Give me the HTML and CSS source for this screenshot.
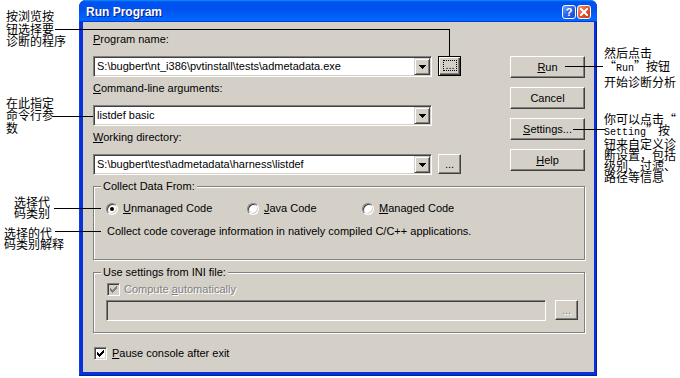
FILE: index.html
```html
<!DOCTYPE html>
<html lang="zh-CN">
<head>
    <meta charset="UTF-8">
    <meta name="viewport" content="width=device-width, initial-scale=1.0">
    <title>Run Program</title>
    <link rel="stylesheet" href="styles.css">
</head>
<body>
    <div class="page">
        <!-- callouts on the left -->
        <div class="notes notes-left">
            <p class="note note-browse">按浏览按<br>钮选择要<br>诊断的程序</p>
            <p class="note note-args">在此指定<br>命令行参<br>数</p>
            <p class="note note-type">选择代<br>码类别</p>
            <p class="note note-desc">选择的代<br>码类别解释</p>
        </div>

        <div class="window">
            <div class="titlebar">
                <span class="title">Run Program</span>
                <div class="caption-btns">
                    <span class="caption-btn help-btn">?</span>
                    <span class="caption-btn close-btn">
                        <svg width="8" height="8" viewBox="0 0 8 8">
                            <path d="M1 1L7 7M7 1L1 7" stroke="#fff" stroke-width="2" stroke-linecap="square"/>
                        </svg>
                    </span>
                </div>
            </div>

            <div class="dialog">
                <div class="top">
                    <div class="fields">
                        <div class="field-label"><u>P</u>rogram name:</div>
                        <div class="field-row">
                            <div class="combo">
                                <span class="combo-text">S:\bugbert\nt_i386\pvtinstall\tests\admetadata.exe</span>
                                <span class="drop"><svg width="7" height="4" viewBox="0 0 7 4"><path d="M0 0h7v1h-7zM1 1h5v1h-5zM2 2h3v1h-3zM3 3h1v1h-1z"/></svg></span>
                            </div>
                            <span class="btn browse focused"><span class="focus-rect">...</span></span>
                        </div>

                        <div class="field-label"><u>C</u>ommand-line arguments:</div>
                        <div class="field-row">
                            <div class="combo">
                                <span class="combo-text">listdef basic</span>
                                <span class="drop"><svg width="7" height="4" viewBox="0 0 7 4"><path d="M0 0h7v1h-7zM1 1h5v1h-5zM2 2h3v1h-3zM3 3h1v1h-1z"/></svg></span>
                            </div>
                        </div>

                        <div class="field-label"><u>W</u>orking directory:</div>
                        <div class="field-row">
                            <div class="combo">
                                <span class="combo-text">S:\bugbert\test\admetadata\harness\listdef</span>
                                <span class="drop"><svg width="7" height="4" viewBox="0 0 7 4"><path d="M0 0h7v1h-7zM1 1h5v1h-5zM2 2h3v1h-3zM3 3h1v1h-1z"/></svg></span>
                            </div>
                            <span class="btn browse">...</span>
                        </div>
                    </div>

                    <div class="actions">
                        <span class="btn push"><span><u>R</u>un</span></span>
                        <span class="btn push">Cancel</span>
                        <span class="btn push"><span><u>S</u>ettings...</span></span>
                        <span class="btn push"><span><u>H</u>elp</span></span>
                    </div>
                </div>

                <div class="group group-collect">
                    <span class="group-title">Collect Data From:</span>
                    <div class="radio-row">
                        <span class="radio-item wide"><span class="radio on"></span><span><u>U</u>nmanaged Code</span></span>
                        <span class="radio-item mid"><span class="radio"></span><span><u>J</u>ava Code</span></span>
                        <span class="radio-item"><span class="radio"></span><span><u>M</u>anaged Code</span></span>
                    </div>
                    <div class="desc">Collect code coverage information in natively compiled C/C++ applications.</div>
                </div>

                <div class="group group-ini">
                    <span class="group-title">Use settings from INI file:</span>
                    <div class="check-row ini-check">
                        <span class="check off"><svg width="7" height="7" viewBox="0 0 7 7"><path d="M6 0h1v1h-1zM5 1h2v1h-2zM0 2h1v1h-1zM4 2h3v1h-3zM0 3h2v1h-2zM3 3h3v1h-3zM0 4h5v1h-5zM1 5h3v1h-3zM2 6h1v1h-1z"/></svg></span>
                        <span class="disabled">Compute <u>a</u>utomatically</span>
                    </div>
                    <div class="ini-row">
                        <div class="textbox off"></div>
                        <span class="btn browse small"><span class="disabled">...</span></span>
                    </div>
                </div>

                <div class="check-row pause">
                    <span class="check"><svg width="7" height="7" viewBox="0 0 7 7"><path d="M6 0h1v1h-1zM5 1h2v1h-2zM0 2h1v1h-1zM4 2h3v1h-3zM0 3h2v1h-2zM3 3h3v1h-3zM0 4h5v1h-5zM1 5h3v1h-3zM2 6h1v1h-1z"/></svg></span>
                    <span><u>P</u>ause console after exit</span>
                </div>
            </div>
        </div>

        <!-- callouts on the right -->
        <div class="notes notes-right">
            <p class="note note-run">然后点击<br><span class="q open">“</span><span class="latin">Run</span><span class="q">”</span>按钮<br>开始诊断分析</p>
            <p class="note note-settings">你可以点击<span class="q open">“</span><br><span class="latin">Setting</span><span class="q">”</span>按<br>钮来自定义诊<br>断设置，包括<br>级别、过滤、<br>路径等信息</p>
        </div>

        <!-- leader lines drawn over everything -->
        <svg class="leaders" width="680" height="378" viewBox="0 0 680 378">
            <path d="M55 29.5H449.5V56" />
            <path d="M53 116.5H93" />
            <path d="M54 208.5H101" />
            <path d="M55 231.5H101" />
            <path d="M565 66.5H603" />
            <path d="M573 129.5H605" />
        </svg>
    </div>
</body>
</html>
```

FILE: styles.css
```css
body {
    margin: 0;
    background: #fff;
    font-family: 'Liberation Sans', Arial, sans-serif;
    font-size: 11px;
    color: #000;
}

.page {
    position: relative;
    display: flex;
    width: 680px;
    height: 378px;
    overflow: hidden;
}

/* callouts */
.notes {
    display: flex;
    flex-direction: column;
    font-family: 'Noto Sans CJK SC', sans-serif;
    font-size: 12px;
}

.notes-left {
    width: 79px;
    flex-shrink: 0;
}

.notes-right {
    flex: 1;
    padding-left: 7px;
}

.note {
    margin: 0;
    white-space: nowrap;
    line-height: 11px;
}

.note-browse {
    margin-top: 10px;
    padding-left: 6px;
    line-height: 12.5px;
}

.note-args {
    margin-top: 49px;
    padding-left: 6px;
    line-height: 12.5px;
}

.note-type {
    margin-top: 61.5px;
    padding-left: 14px;
}

.note-desc {
    margin-top: 9px;
    padding-left: 4px;
}

.note-run {
    margin-top: 46px;
    line-height: 13px;
}

.note-settings {
    margin-top: 25px;
}

.latin {
    font-family: 'Liberation Mono', monospace;
    font-size: 10px;
}

/* full-width quote cells */
.q {
    display: inline-block;
    width: 12px;
    text-align: left;
}

.q.open {
    text-align: right;
}

.leaders {
    position: absolute;
    left: 0;
    top: 0;
    pointer-events: none;
}

.leaders path {
    fill: none;
    stroke: #000;
    stroke-width: 1;
    shape-rendering: crispEdges;
}

/* window frame */
.window {
    width: 518px;
    height: 376px;
    flex-shrink: 0;
    display: flex;
    flex-direction: column;
    background: #0831d9;
    border-radius: 7px 7px 0 0;
    box-shadow: inset -1px -1px #001ea0, inset 1px 0 #0a3fe0;
}

.titlebar {
    height: 22px;
    box-sizing: border-box;
    display: flex;
    align-items: flex-start;
    padding: 5px 6px 0 7px;
    border-radius: 7px 7px 0 0;
    background: linear-gradient(to bottom, #0997ff 0%, #0053ee 8%, #0050ee 40%, #0066ff 88%, #0066ff 93%, #005bff 95%, #003dd7 96%, #003dd7 100%);
}

.title {
    color: #fff;
    font-weight: bold;
    font-size: 12px;
    line-height: 15px;
    text-shadow: 1px 1px #0a1883;
}

.caption-btns {
    margin-left: auto;
    display: flex;
    gap: 1px;
}

.caption-btn {
    width: 14px;
    height: 14px;
    box-sizing: border-box;
    border: 1px solid #fff;
    border-radius: 3px;
    display: flex;
    align-items: center;
    justify-content: center;
    color: #fff;
    font-weight: bold;
    font-size: 11px;
    line-height: 12px;
}

.help-btn {
    background: linear-gradient(135deg, #6fa6ff, #2a62e8 50%, #1848d0);
}

.close-btn {
    background: linear-gradient(135deg, #f39a7a, #e2552f 50%, #c53a12);
}

/* dialog body */
.dialog {
    flex: 1;
    margin: 0 3px 4px 4px;
    padding: 11px 9px 0 10px;
    background: #d4d0c8;
}

.top {
    display: flex;
}

.fields {
    width: 368px;
}

.field-label {
    line-height: 13px;
    height: 13px;
    margin-bottom: 10px;
}

.field-row {
    display: flex;
    height: 21px;
    margin-bottom: 5px;
}

.combo,
.textbox {
    display: flex;
    width: 339px;
    height: 21px;
    box-sizing: border-box;
    padding: 1px;
    border: 1px solid;
    border-color: #808080 #fff #fff #808080;
    box-shadow: inset 1px 1px #404040, inset -1px -1px #d4d0c8;
    background: #fff;
}

.combo-text {
    flex: 1;
    padding-left: 2px;
    line-height: 17px;
    white-space: nowrap;
    overflow: hidden;
}

.drop {
    width: 16px;
    box-sizing: border-box;
    border: 1px solid;
    border-color: #d4d0c8 #404040 #404040 #d4d0c8;
    box-shadow: inset 1px 1px #fff, inset -1px -1px #808080;
    background: #d4d0c8;
    display: flex;
    align-items: center;
    justify-content: center;
}

.textbox.off {
    width: 440px;
    background: #d4d0c8;
}

/* buttons */
.btn {
    box-sizing: border-box;
    border: 1px solid;
    border-color: #fff #404040 #404040 #fff;
    box-shadow: inset -1px -1px #808080;
    background: #d4d0c8;
    display: flex;
    align-items: center;
    justify-content: center;
}

.actions {
    margin-left: auto;
    margin-top: 23px;
    width: 75px;
    display: flex;
    flex-direction: column;
    gap: 9px;
}

.push {
    height: 22px;
}

.browse {
    width: 23px;
    height: 20px;
    margin-left: 6px;
    align-items: flex-end;
    line-height: 13px;
    padding-bottom: 2px;
}

.browse.focused {
    border-color: #000;
    box-shadow: inset 1px 1px #fff, inset -1px -1px #404040, inset -2px -2px #808080;
    align-items: stretch;
    padding: 3px 3px 4px 4px;
}

.focus-rect {
    flex: 1;
    border: 1px dotted #000;
    display: flex;
    align-items: flex-end;
    justify-content: center;
    line-height: 9px;
}

.browse.small {
    margin-left: 9px;
}

/* group boxes */
.group {
    border: 1px solid #808080;
    box-shadow: inset 1px 1px #fff, 1px 1px #fff;
    padding: 0 5px 0 12px;
}

.group-title {
    display: block;
    width: max-content;
    margin: -7px 0 0 -5px;
    padding: 0 2px;
    background: #d4d0c8;
    line-height: 13px;
}

.group-collect {
    margin-top: 6px;
    padding-bottom: 21px;
}

.radio-row {
    display: flex;
    margin-top: 9px;
    height: 13px;
    line-height: 13px;
}

.radio-item {
    display: flex;
    align-items: center;
    gap: 5px;
}

.radio-item.wide {
    width: 141px;
}

.radio-item.mid {
    width: 115px;
}

.radio {
    width: 12px;
    height: 12px;
    box-sizing: border-box;
    border-radius: 50%;
    border: 1px solid;
    border-color: #808080 #fff #fff #808080;
    box-shadow: inset 1px 1px #404040, inset -1px -1px #d4d0c8;
    background: #fff;
    display: flex;
    align-items: center;
    justify-content: center;
}

.radio.on::after {
    content: "";
    width: 4px;
    height: 4px;
    border-radius: 50%;
    background: #000;
}

.desc {
    margin: 10px 0 0 1px;
    line-height: 13px;
}

.group-ini {
    margin-top: 12px;
    padding-bottom: 11px;
}

.check-row {
    display: flex;
    align-items: center;
    height: 13px;
    line-height: 13px;
}

.ini-check {
    margin: 4px 0 0 1px;
    gap: 4px;
}

.ini-row {
    display: flex;
    margin-top: 4px;
}

.check {
    width: 13px;
    height: 13px;
    box-sizing: border-box;
    border: 1px solid;
    border-color: #808080 #fff #fff #808080;
    box-shadow: inset 1px 1px #404040, inset -1px -1px #d4d0c8;
    background: #fff;
    display: flex;
    align-items: center;
    justify-content: center;
}

.check.off {
    background: #d4d0c8;
    fill: #808080;
}

.disabled {
    color: #808080;
    text-shadow: 1px 1px #fff;
}

.pause {
    margin: 14px 0 0 1px;
    gap: 5px;
}
```
